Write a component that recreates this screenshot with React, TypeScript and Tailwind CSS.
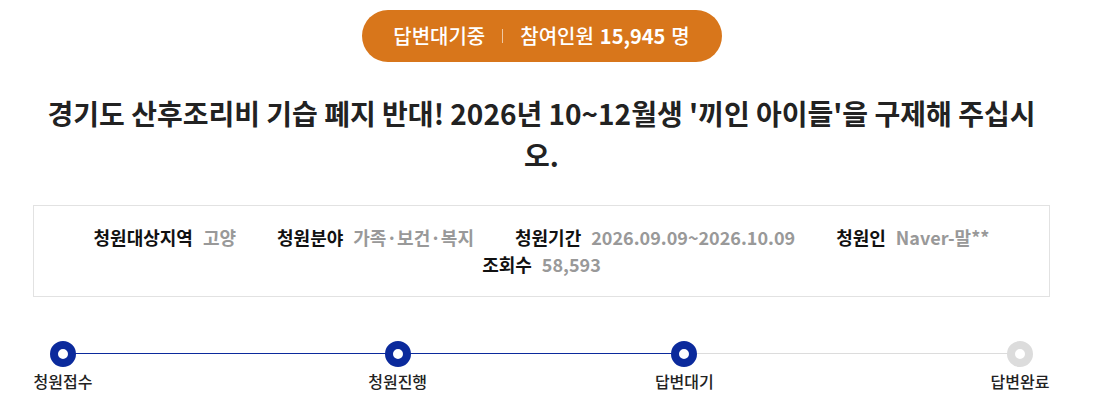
import React from 'react';

const steps = [
    { label: '청원접수', done: true },
    { label: '청원진행', done: true },
    { label: '답변대기', done: true },
    { label: '답변완료', done: false },
];

const info = [
    { label: '청원대상지역', value: '고양' },
    { label: '청원분야', value: '가족·보건·복지' },
    { label: '청원기간', value: '2026.09.09~2026.10.09' },
    { label: '청원인', value: 'Naver-말**' },
    { label: '조회수', value: '58,593' },
];

const StepDot = ({ done }: { done: boolean }) => (
    <span
        className={
            done
                ? 'w-[26px] h-[26px] rounded-full border-[8px] border-[#0b2a9c] bg-white'
                : 'w-[26px] h-[26px] rounded-full border-[8px] border-[#dcdcdc] bg-white'
        }
    />
);

export default function App() {
    return (
        <div
            className="w-[1100px] h-[417px] bg-white text-[#222] overflow-hidden"
            style={{ fontFamily: '"Noto Sans CJK KR", "Noto Sans", sans-serif' }}
        >
            <div className="w-[1017px] ml-[33px] flex flex-col items-center">
                {/* Status pill */}
                <div className="mt-[10px] h-[52px] w-[360px] rounded-full bg-[#d8761b] text-white flex items-center justify-center text-[20px]">
                    <span className="font-medium">답변대기중</span>
                    <span className="mx-[17px] h-[14px] w-px bg-white/60" />
                    <span className="font-medium">참여인원</span>
                    <span className="ml-[6px] font-bold">15,945</span>
                    <span className="ml-[6px] font-medium">명</span>
                </div>

                {/* Title */}
                <h1 className="mt-[30px] px-[10px] text-center text-[28px] leading-[42px] font-bold text-[#222]">
                    경기도 산후조리비 기습 폐지 반대! 2026년 10~12월생 '끼인 아이들'을 구제해 주십시오.
                </h1>

                {/* Info box */}
                <div className="mt-[29px] w-full h-[92px] border border-[#e2e2e2] flex items-center justify-center">
                    <div className="flex flex-wrap justify-center gap-x-[41px] gap-y-0 w-[950px] text-[18px] leading-[27px]">
                        {info.map((item) => (
                            <div key={item.label} className="flex items-center gap-[10px]">
                                <span className="font-bold text-[#111]">{item.label}</span>
                                <span className="font-bold text-[#999]">{item.value}</span>
                            </div>
                        ))}
                    </div>
                </div>

                {/* Progress */}
                <div className="relative mt-[42px] w-full">
                    <div className="absolute left-[29px] right-[29px] top-[14px] h-px bg-[#dcdcdc]" />
                    <div className="absolute left-[29px] w-[623px] top-[14px] h-px bg-[#0b2a9c]" />
                    <div className="relative grid grid-cols-[60px_275fr_60px_227fr_60px_276fr_60px]">
                        {steps.map((s, i) => (
                            <React.Fragment key={s.label}>
                                {i > 0 && <div />}
                                <div className="flex flex-col items-center">
                                    <div className="h-[30px] flex items-center">
                                        <StepDot done={s.done} />
                                    </div>
                                    <span className="text-[16px] leading-[24px] whitespace-nowrap font-medium text-[#222]">{s.label}</span>
                                </div>
                            </React.Fragment>
                        ))}
                    </div>
                </div>
            </div>
        </div>
    );
}
